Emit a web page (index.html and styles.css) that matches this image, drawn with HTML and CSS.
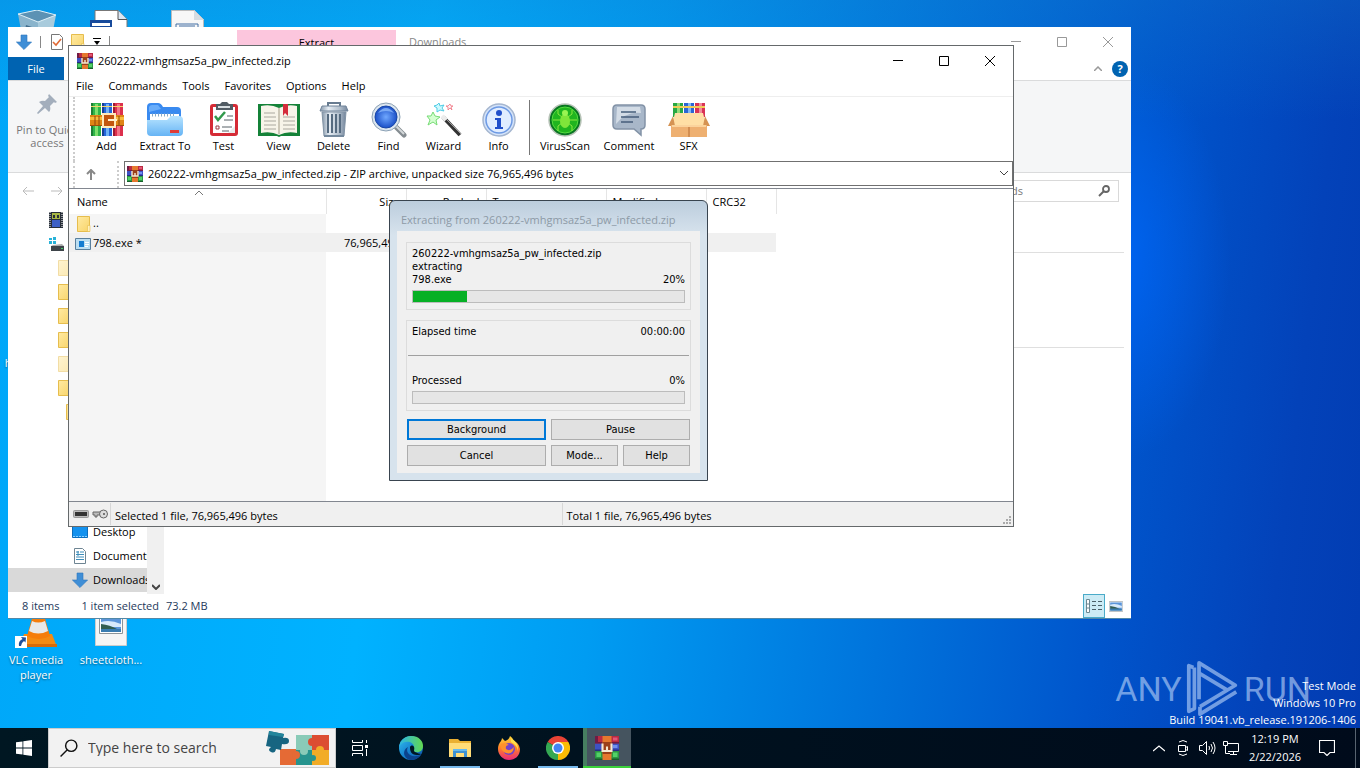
FILE: index.html
```html
<!DOCTYPE html>
<html lang="en">
<head>
    <meta charset="UTF-8">
    <meta name="viewport" content="width=device-width, initial-scale=1.0">
    <title>Desktop</title>
    <link rel="stylesheet" href="styles.css">
</head>
<body>

<svg class="defs" aria-hidden="true">
    <defs>
        <linearGradient id="g-folder" x2="1" y2="1"><stop offset="0" stop-color="#ffeaa3"/><stop offset="1" stop-color="#f8d469"/></linearGradient>
        <linearGradient id="g-blue" x2="0" y2="1"><stop offset="0" stop-color="#b8e4ff"/><stop offset="1" stop-color="#66b4f5"/></linearGradient>
        <linearGradient id="g-steel" x2="1" y2="0"><stop offset="0" stop-color="#8496a8"/><stop offset=".3" stop-color="#e6edf4"/><stop offset=".7" stop-color="#b3c0cd"/><stop offset="1" stop-color="#71839a"/></linearGradient>
        <radialGradient id="g-lens"><stop offset="0" stop-color="#70a8ff"/><stop offset="1" stop-color="#1b50c8"/></radialGradient>
        <linearGradient id="g-edge" x2="1" y2="1"><stop offset="0" stop-color="#35c1f1"/><stop offset=".5" stop-color="#1684d0"/><stop offset="1" stop-color="#0c50a4"/></linearGradient>
        <linearGradient id="g-edge2" x2="1" y2="0"><stop offset="0" stop-color="#2bb5e9"/><stop offset="1" stop-color="#62d94f"/></linearGradient>
        <linearGradient id="g-fox" x2="0" y2="1"><stop offset="0" stop-color="#ffd83a"/><stop offset=".5" stop-color="#ff8128"/><stop offset="1" stop-color="#e9287a"/></linearGradient>
    </defs>
    <symbol id="rar" viewBox="0 0 16 16">
        <path fill="#b92b42" d="M0 0h16v5H0z"/><path fill="#3e52c4" d="M0 5h16v5H0z"/><path fill="#2c9744" d="M0 10h16v6H0z"/>
        <path fill="#711b45" d="M0 4h16v1H0zM0 0h2v5H0z"/><path fill="#252d83" d="M0 9h16v1H0z"/><path fill="#165e2b" d="M0 15h16v1H0z"/>
        <path fill="#52d167" d="M1 11h3v3H1zM12 11h3v3h-3z"/><path fill="#e35577" d="M12 1h3v2h-3z"/><path fill="#7190ed" d="M12 6h3v2h-3z"/>
        <path fill="#e5782e" d="M5 0h6v16H5z"/><path fill="#9b401b" d="M5 4h6v8H5z"/>
        <path fill="none" stroke="#f7e8d0" stroke-width="1.4" d="M5 5v5h6V5M8 7v3"/>
    </symbol>
    <symbol id="folder" viewBox="0 0 14 16">
        <path fill="url(#g-folder)" stroke="#e6bd4d" d="M.5.5h12v15H.5z"/><path fill="#fff1bd" stroke="#e6bd4d" stroke-width=".6" d="M10.5 9.5h2.5v6h-2.5z"/>
    </symbol>
    <symbol id="down" viewBox="0 0 16 16">
        <path fill="#3f8ed6" stroke="#2b76bd" stroke-width=".6" d="M5 1h6v7h4.600L8 15.600.4 8H5z"/>
    </symbol>
    <symbol id="pic" viewBox="0 0 24 18">
        <path fill="#fff" stroke="#8c9499" d="M.5.5h23v17H.5z"/><path fill="#5b95d9" d="M2 2h20v14H2z"/><path fill="#d8eafb" d="M2 6q9-3 20 2v3H2z"/><path fill="#315d50" d="M2 8q9 1 16 5H2z"/><path fill="#397cb0" d="M2 13h20v3H2z"/>
    </symbol>
    <symbol id="glass" viewBox="0 0 16 16">
        <circle cx="10" cy="6" r="5" fill="none" stroke="currentColor" stroke-width="1.300"/><path stroke="currentColor" stroke-width="1.300" d="M6.500 9.500.5 15.500"/>
    </symbol>
    <symbol id="min" viewBox="0 0 10 10"><path stroke="currentColor" d="M0 4.500h10"/></symbol>
    <symbol id="max" viewBox="0 0 10 10"><path fill="none" stroke="currentColor" d="M.5.500h9v9h-9z"/></symbol>
    <symbol id="close" viewBox="0 0 10 10"><path stroke="currentColor" d="m0 0 10 10M10 0 0 10"/></symbol>
</svg>

<main class="desktop">

    <!-- desktop icons -->
    <div class="shortcut bin">
        <svg width="40" height="44" viewBox="0 0 40 44"><path fill="#8ab4cc" d="m1 4 20 7v30L7 36z"/><path fill="#a9cbdc" d="m21 11 18-6-6 31-12 5z"/><path fill="#5c92b4" stroke="#e0f1f8" d="m1 4 19-4 19 5-18 7z"/><path fill="#416d8d" d="m9 15 6 2 1 5-8-2z"/></svg>
    </div>
    <div class="shortcut doc">
        <svg width="38" height="44" viewBox="0 0 38 44"><path fill="#fff" stroke="#777" d="M5 .5h23l9 9V44H5z"/><path fill="#dde7f2" stroke="#555" d="M28 .5v9h9"/><path fill="#174a9b" d="M0 10h22v20H0z"/><path fill="#fff" d="M2 13h18v3H2zM4 17h3v4H4zM10 17h2v4h-2z"/></svg>
    </div>
    <div class="shortcut sheet">
        <svg width="33" height="44" viewBox="0 0 33 44"><path fill="#f7f7f7" stroke="#bbb" d="M.5.5h23l9 9V44H.5z"/><path fill="#d5dce2" d="M23 0v10h10z"/><path fill="none" stroke="#436fa4" d="M5 14h22v20H5z"/><path stroke="#436fa4" d="M8 16h16"/></svg>
    </div>
    <div class="shortcut hidden-label">h</div>
    <div class="shortcut vlc">
        <svg width="42" height="40" viewBox="0 0 42 40"><path fill="#f48b13" d="M9 26h28l5 13H4z"/><path fill="#d96b07" d="M4 36h38v3H4z"/><path fill="#f57d0b" d="M20 0h7l8 28q-11 6-23 0z"/><path fill="#e8e8e8" d="m17 13-3 10q9 5 19 0l-3-10q-7 3-13 0z"/><path fill="#fff" d="M0 28h12v12H0z"/><path fill="#20509a" d="m6 29 5 .5-.5 5-1.500-1.500q-3 2-3 5L4 38q-1-5 3.500-7z"/></svg>
        <span>VLC media player</span>
    </div>
    <div class="shortcut image">
        <svg width="32" height="38" viewBox="0 0 32 38"><path fill="#f5f5f5" stroke="#ccc" d="M.5.5h31v37H.5z"/><use href="#pic" x="4" y="8" width="24" height="18"/></svg>
        <span>sheetcloth...</span>
    </div>

    <!-- file explorer -->
    <section class="window explorer">
        <header class="ex-title">
            <div class="quick">
                <svg width="16" height="16"><use href="#down"/></svg>
                <i class="bar"></i>
                <svg class="check" width="12" height="16" viewBox="0 0 12 16"><path fill="#fff" stroke="#777" d="M.5.500h8l3 3v12H.5z"/><path fill="none" stroke="#e06a35" stroke-width="1.600" d="m2 8 3 3 5-6"/></svg>
                <svg width="14" height="16"><use href="#folder"/></svg>
                <svg class="drop" width="8" height="8" viewBox="0 0 8 8"><path d="M0 0h8v1H0zM1 3h6L4 7z"/></svg>
                <i class="bar"></i>
            </div>
            <div class="extract-tab">Extract</div>
            <span class="ex-name">Downloads</span>
            <div class="win-buttons muted">
                <button aria-label="Minimize"><svg width="10" height="10"><use href="#min"/></svg></button>
                <button aria-label="Maximize"><svg width="10" height="10"><use href="#max"/></svg></button>
                <button aria-label="Close"><svg width="10" height="10"><use href="#close"/></svg></button>
            </div>
        </header>
        <div class="ex-tabs">
            <button class="file-tab">File</button>
            <div class="ex-help">
                <svg width="8" height="5" viewBox="0 0 8 5"><path fill="none" stroke="#999" stroke-width="1.500" d="m0 5 4-4 4 4"/></svg>
                <button aria-label="Help">?</button>
            </div>
        </div>
        <div class="ribbon">
            <button class="pin">
                <svg width="22" height="22" viewBox="0 0 22 22"><path fill="#a3aebc" d="m13 1 8 8-2 1-1-1-4 4q1 4-1 6l-4-4-7 6-1-1 6-7-4-4q3-2 6-1l4-4-1-1z"/></svg>
                <span>Pin to Quick access</span>
            </button>
        </div>
        <div class="ex-nav">
            <svg width="12" height="10" viewBox="0 0 12 10"><path fill="none" stroke="#bbb" d="M12 5H1M5 1 1 5l4 4"/></svg>
            <svg width="12" height="10" viewBox="0 0 12 10"><path fill="none" stroke="#bbb" d="M0 5h11M7 1l4 4-4 4"/></svg>
            <label class="ex-search">
                <input type="text" placeholder="Search Downloads" aria-label="Search Downloads">
                <svg width="12" height="12" viewBox="0 0 12 12"><circle cx="8" cy="4" r="3" fill="none" stroke="#666" stroke-width="1.800"/><path stroke="#666" stroke-width="2" d="m6 6-5 5"/></svg>
            </label>
        </div>
        <div class="ex-body">
            <div class="tree">
                <div class="node root"><svg width="14" height="16" viewBox="0 0 14 16"><path fill="#272e38" d="M0 0h14v16H0z"/><path fill="#a7b644" d="M3 1h8v6H3z"/><path fill="#3d60c6" d="M3 8h8v7H3z"/><path fill="#272e38" d="M4 3h2v3H4zM8 3h2v3H8z"/><path stroke="#fff" stroke-dasharray="1 1" d="M1 0v16M13 0v16"/></svg></div>
                <div class="node root"><svg width="15" height="14" viewBox="0 0 15 14"><path fill="#28b2d8" d="M0 1h3v2H0zM4 0h3v3H4zM0 4h3v3H0zM4 4h3v3H4z"/><path fill="#aaa" d="m4 8 9-1 2 2H2z"/><path fill="#3d4449" d="M2 9h13v5H2z"/><path fill="#46d16b" d="M12 11h2v1h-2z"/></svg></div>
                <div class="node faded"><svg width="14" height="16"><use href="#folder"/></svg></div>
                <div class="node"><svg width="14" height="16"><use href="#folder"/></svg></div>
                <div class="node"><svg width="14" height="16"><use href="#folder"/></svg></div>
                <div class="node"><svg width="14" height="16"><use href="#folder"/></svg></div>
                <div class="node faded"><svg width="14" height="16"><use href="#folder"/></svg></div>
                <div class="node"><svg width="14" height="16"><use href="#folder"/></svg></div>
                <div class="node sub"><svg width="14" height="16"><use href="#folder"/></svg></div>
                <div class="node"></div>
                <div class="node"></div>
                <div class="node"></div>
                <div class="node"></div>
                <div class="node leaf"><svg width="16" height="16" viewBox="0 0 16 16"><path fill="#1391ee" stroke="#0c6dbb" d="M.5 1.500h15v12H.5z"/><path stroke="#8ed0ff" stroke-dasharray="2 1" d="M1 12.500h14"/></svg>Desktop</div>
                <div class="node leaf"><svg width="16" height="16" viewBox="0 0 16 16"><path fill="#fff" stroke="#6e8593" d="M2.500.500h8l3 3v12h-11z"/><path stroke="#3c8dba" d="M8 4h4M4 4h3M4 6.500h8M4 9h8M4 11.500h8M6 3v5"/></svg>Documents</div>
                <div class="node leaf selected"><svg width="16" height="16"><use href="#down"/></svg>Downloads</div>
            </div>
            <div class="scroll"><svg width="8" height="6" viewBox="0 0 8 6"><path fill="none" stroke="#444" stroke-width="2" d="m0 1 4 4 4-4"/></svg></div>
            <div class="files"><div class="group"></div><div class="group tall"></div></div>
        </div>
        <footer class="ex-status">
            <span>8 items</span><span>1 item selected</span><span>73.2 MB</span>
            <div class="views">
                <button class="active" aria-label="Details"><svg width="16" height="14" viewBox="0 0 16 14"><path fill="#fff" stroke="#6b8791" d="M.5.500h3v13h-3zM.5 5h3M.5 9h3"/><path stroke="#4b606a" d="M6 2.500h4M12 2.500h4M6 6.500h4M12 6.500h4M6 10.500h4M12 10.500h4"/></svg></button>
                <button aria-label="Large icons"><svg width="14" height="11"><use href="#pic"/></svg></button>
            </div>
        </footer>
    </section>

    <!-- archive window -->
    <section class="window archive">
        <header class="ar-title">
            <svg width="16" height="16"><use href="#rar"/></svg>
            <span>260222-vmhgmsaz5a_pw_infected.zip</span>
            <div class="win-buttons">
                <button aria-label="Minimize"><svg width="10" height="10"><use href="#min"/></svg></button>
                <button aria-label="Maximize"><svg width="10" height="10"><use href="#max"/></svg></button>
                <button aria-label="Close"><svg width="10" height="10"><use href="#close"/></svg></button>
            </div>
        </header>
        <nav class="menu">
            <button>File</button><button>Commands</button><button>Tools</button><button>Favorites</button><button>Options</button><button>Help</button>
        </nav>
        <div class="toolbar">
            <button>
                <svg width="36" height="36" viewBox="0 0 36 36"><path fill="#2fb449" d="M2 1h10v33H2z"/><path fill="#2465d7" d="M13 1h10v33H13z"/><path fill="#dc304d" d="M24 1h10v33H24z"/><path fill="#1b7f35" d="M2 1h2v33H2z"/><path fill="#7ddf6d" d="M6 2h3v32H6z"/><path fill="#173f94" d="M13 1h2v33h-2z"/><path fill="#6fb2f7" d="M17 2h3v32h-3z"/><path fill="#9d1933" d="M24 1h2v33h-2z"/><path fill="#f27387" d="M28 2h3v32h-3z"/><path fill="#f2d36b" d="M2 4h10v1H2zM13 4h10v1H13zM24 4h10v1H24z"/><path fill="#df8416" d="M1 13h34v11H1z"/><path fill="#f8bd3e" d="M1 15h34v3H1z"/><path fill="#9f4e0c" d="M1 23h34v1H1z"/><rect x="14" y="12" width="12" height="13" fill="#c2560f" stroke="#ffe9b9" stroke-width="2"/><path stroke="#fff1cf" stroke-width="2" d="M19 18h9"/><path stroke="#8d4408" d="M6 14v9M10 14v9M30 14v9"/></svg>
                <span>Add</span>
            </button>
            <button class="mid">
                <svg width="36" height="36" viewBox="0 0 36 36"><path fill="#398af0" d="M0 5q0-4 4-4h7q3 0 5 4h14q4 0 4 4v21H0z"/><path fill="#69adfa" d="M2 5q1-2 3-2h6l3 4-12 3z"/><path fill="#fff" d="M3 12h29v10H3z"/><path stroke="#86a8c4" stroke-width="3" stroke-dasharray="1 2" d="M5 13h24"/><path fill="url(#g-blue)" d="M0 18h20l4-4h8q4 0 4 4v12q0 4-4 4H4q-4 0-4-4z"/><path fill="#df3b37" d="M23 28h9v3h-9z"/></svg>
                <span>Extract To</span>
            </button>
            <button>
                <svg width="36" height="36" viewBox="0 0 36 36"><rect x="4" y="2" width="28" height="32" rx="3" fill="#d52b36"/><path fill="#fff" d="M7 5h22v26H7z"/><path fill="#e8ebeb" d="M22 31h7v-7z"/><path fill="#525c64" d="M10 2h4l2-2h5l2 2h4v6H10z"/><path fill="#d9dfe2" d="M12 4h12v2H12z"/><path fill="none" stroke="#329a4c" stroke-width="2.500" d="m9 14 3 4 7-8"/><path fill="none" stroke="#9b3f49" d="M10 24h3v3h-3z"/><path stroke="#596269" d="M21 14h6M18 18h9M16 25h10M16 29h7"/></svg>
                <span>Test</span>
            </button>
            <button>
                <svg width="42" height="36" viewBox="0 0 42 36"><path fill="#148238" d="M0 2h42v32H23l-2 1-2-1H0z"/><path fill="#f7f4e9" d="M3 4q10-2 18 2 8-4 18-2v27q-10-2-18 2-8-4-18-2z"/><path fill="#ccc7b7" d="M20 6h2v26h-2z"/><path stroke="#aaa89f" d="M6 11h11M6 15h12M6 19h12M6 23h12M6 27h12M25 15h12M25 19h12M25 23h12M25 27h12"/><path fill="#d42d3c" d="M25 2h5v12l-3-3-2 3z"/></svg>
                <span>View</span>
            </button>
            <button>
                <svg width="36" height="36" viewBox="0 0 36 36"><path fill="none" stroke="#677b90" stroke-width="2" d="M12 4V1h12v3"/><path fill="url(#g-steel)" stroke="#8193a5" d="M6 10h24l-2 24H8z"/><path stroke="#566b80" stroke-width="2" d="M12 12v19M16 12v19M20 12v19M24 12v19"/><path fill="url(#g-steel)" stroke="#71849a" d="M6 4h24l2 5H4z"/><path fill="#74899d" d="M8 33h20v2H8z"/></svg>
                <span>Delete</span>
            </button>
            <button>
                <svg width="36" height="36" viewBox="0 0 36 36"><path stroke="#858c91" stroke-width="5" stroke-linecap="round" d="m24 24 9 9"/><path stroke="#d4d8da" stroke-width="2" d="m25 24 8 8"/><circle cx="15" cy="15" r="14" fill="#dce6ef" stroke="#8ca1b5"/><circle cx="15" cy="15" r="11" fill="url(#g-lens)" stroke="#1947a6"/><path fill="#97c3ff" opacity=".7" d="M7 11q8-10 16 0-8-4-16 0z"/></svg>
                <span>Find</span>
            </button>
            <button>
                <svg width="36" height="36" viewBox="0 0 36 36"><path stroke="#333" stroke-width="4" d="m17 15 17 18"/><path stroke="#9b9b9b" d="m17 14 18 18"/><path stroke="#ececec" stroke-width="4" d="m16 14 4 4"/><path fill="#d4ffd0" stroke="#77db76" d="m7 10 2 4 5 1-4 3 1 5-4-3-5 3 2-5-3-4h4z"/><path fill="#cdfaff" stroke="#51cce5" d="m13 1 1 3 4-1-2 3 2 3-4-1-3 2v-4L8 4l3-1z"/><path fill="#fff0f3" stroke="#ef7382" stroke-width=".8" d="m24 2 1 2h2l-2 1 1 3-2-2-2 2v-3l-2-1h2z"/></svg>
                <span>Wizard</span>
            </button>
            <button>
                <svg width="36" height="36" viewBox="0 0 36 36"><circle cx="18" cy="18" r="16" fill="#d4e3f9" stroke="#a5b6cf" stroke-width="1.500"/><circle cx="18" cy="18" r="13" fill="#e1edff" stroke="#6d9ae4" stroke-width="1.500"/><circle cx="18" cy="11" r="3" fill="#214fca"/><path fill="#214fca" d="M14 16h6v9h2v2h-8v-2h2v-7h-2z"/></svg>
                <span>Info</span>
            </button>
            <i class="split"></i>
            <button class="wide">
                <svg width="36" height="36" viewBox="0 0 36 36"><circle cx="18" cy="18" r="16" fill="#087620" stroke="#b8c3b8" stroke-width="1.500"/><circle cx="18" cy="18" r="13" fill="#20b51f" stroke="#54dc40"/><path stroke="#8ce640" fill="none" d="M11 8v4l4 3M25 8v4l-4 3M6 18h8M22 18h8M11 29v-5l4-3M25 29v-5l-4-3"/><ellipse cx="18" cy="19" rx="5" ry="7" fill="#80e53a"/><circle cx="18" cy="11" r="3" fill="#9af452"/></svg>
                <span>VirusScan</span>
            </button>
            <button class="wide">
                <svg width="36" height="36" viewBox="0 0 36 36"><path fill="#a8b7c9" stroke="#8292a6" stroke-width="1.500" d="M6 3h24q4 0 4 4v16q0 4-4 4v6l-7-6H6q-4 0-4-4V7q0-4 4-4z"/><path fill="#d3dce6" d="M6 5h23l1 6Q15 9 5 22z"/><path stroke="#455d7b" stroke-width="1.500" d="M10 10h15M10 15h18M10 20h12"/></svg>
                <span>Comment</span>
            </button>
            <button>
                <svg width="42" height="36" viewBox="0 0 42 36"><path fill="#29a843" d="M5 1h10v14H5z"/><path fill="#2c66d4" d="M16 1h10v14H16z"/><path fill="#d93355" d="M27 1h10v14H27z"/><path fill="#93dc79" d="M9 1h3v12H9z"/><path fill="#80b6f4" d="M20 1h3v12h-3z"/><path fill="#f18b9d" d="M31 1h3v12h-3z"/><path fill="#f1cb57" d="M5 4h32v2H5z"/><path fill="#ffdfa5" d="M7 11h28l3 12H4z"/><path fill="#d59353" d="m5 14-5 10h7zM37 14l5 10h-7z"/><path fill="#eeb071" d="M3 23h36v12H3z"/><path fill="#d28e52" d="M20 23h2v12h-2z"/><path fill="#fbd39c" d="M4 23h34v2H4z"/></svg>
                <span>SFX</span>
            </button>
        </div>
        <div class="address-row">
            <button class="up" aria-label="Up"><svg width="10" height="11" viewBox="0 0 10 11"><path fill="none" stroke="#888" stroke-width="2" d="M5 11V2M1 5l4-4 4 4"/></svg></button>
            <div class="address">
                <svg width="16" height="16"><use href="#rar"/></svg>
                <input type="text" aria-label="Address" value="260222-vmhgmsaz5a_pw_infected.zip - ZIP archive, unpacked size 76,965,496 bytes">
                <button aria-label="Open list"><svg width="8" height="5" viewBox="0 0 8 5"><path fill="none" stroke="#444" d="m0 0 4 4 4-4"/></svg></button>
            </div>
        </div>
        <div class="list">
            <svg class="sort" width="8" height="5" viewBox="0 0 8 5"><path fill="none" stroke="#777" d="m0 5 4-4 4 4"/></svg>
            <table>
                <thead>
                    <tr><th class="c-name">Name</th><th class="c-num">Size</th><th class="c-num">Packed</th><th class="c-type">Type</th><th class="c-mod">Modified</th><th class="c-crc">CRC32</th></tr>
                </thead>
                <tbody>
                    <tr><td><svg class="f" width="14" height="16"><use href="#folder"/></svg>..</td><td></td><td></td><td></td><td></td><td></td></tr>
                    <tr class="picked"><td><svg width="16" height="12" viewBox="0 0 16 12"><path fill="#bbdef2" stroke="#587f9d" d="M.5.500h15v11H.5z"/><path fill="#147cd1" d="M4 3h5v6H4z"/><path stroke="#fff" d="M10 4.500h4M10 6.500h4M10 8.500h3"/></svg>798.exe *</td><td class="c-num">76,965,496</td><td></td><td></td><td></td><td></td></tr>
                </tbody>
            </table>
        </div>
        <footer class="ar-status">
            <div class="status-icons">
                <svg width="16" height="8" viewBox="0 0 16 8"><rect x=".5" y=".5" width="15" height="7" rx="1" fill="#bbb" stroke="#999"/><path fill="#333" d="M2 2h12v4H2z"/></svg>
                <svg width="16" height="10" viewBox="0 0 16 10"><path fill="#bbb" stroke="#666" d="M1 3h8v3H5v2H3V6H1z"/><circle cx="11.500" cy="5" r="4" fill="#ddd" stroke="#666"/><circle cx="12" cy="5" r="1" fill="#555"/></svg>
            </div>
            <span>Selected 1 file, 76,965,496 bytes</span>
            <span>Total 1 file, 76,965,496 bytes</span>
            <svg class="grip" width="8" height="8" viewBox="0 0 8 8"><path fill="#aaa" d="M6 0h2v2H6zM3 3h2v2H3zM6 3h2v2H6zM0 6h2v2H0zM3 6h2v2H3zM6 6h2v2H6z"/></svg>
        </footer>
    </section>

    <!-- extraction progress -->
    <section class="dialog" role="dialog" aria-labelledby="dialog-title">
        <h2 id="dialog-title">Extracting from 260222-vmhgmsaz5a_pw_infected.zip</h2>
        <div class="dialog-body">
            <div class="box">
                <p>260222-vmhgmsaz5a_pw_infected.zip</p>
                <p>extracting</p>
                <p class="pair"><label for="file-progress">798.exe</label><span>20%</span></p>
                <progress id="file-progress" value="20" max="100"></progress>
            </div>
            <div class="box second">
                <p class="pair"><span>Elapsed time</span><span>00:00:00</span></p>
                <hr>
                <p class="pair"><label for="total-progress">Processed</label><span>0%</span></p>
                <progress id="total-progress" value="0" max="100"></progress>
            </div>
            <div class="actions">
                <button class="default">Background</button><button class="half">Pause</button>
                <button>Cancel</button><button>Mode...</button><button>Help</button>
            </div>
        </div>
    </section>

    <!-- watermark -->
    <div class="brand">
        <span>ANY</span>
        <svg width="54" height="62" viewBox="0 0 58 62"><path fill="none" stroke="currentColor" stroke-width="4" stroke-linejoin="round" d="M8 8 3 6v49l6-3V8M14 42V3l39 24-38 23M14 14l30 18M15 50v8l39-24"/></svg>
        <span>RUN</span>
    </div>
    <div class="build"><p>Test Mode</p><p>Windows 10 Pro</p><p>Build 19041.vb_release.191206-1406</p></div>
</main>

<footer class="taskbar">
    <button class="start" aria-label="Start"><svg width="16" height="16" viewBox="0 0 16 16"><path fill="#fff" d="M0 2.300 6.500 1.400v6.200H0zM7.300 1.300 16 0v7.600H7.300zM0 8.400h6.500v6.200L0 13.700zM7.300 8.400H16V16l-8.700-1.300z"/></svg></button>
    <label class="search">
        <svg width="18" height="18"><use href="#glass"/></svg>
        <input type="text" placeholder="Type here to search" aria-label="Search">
        <svg width="64" height="36" viewBox="0 0 64 36"><path fill="#e56a35" d="M14 19h17v16H14z"/><path fill="#8acbb8" d="M30 5h17v16H30z"/><path fill="#dc4d32" d="M46 5h17v15H46z"/><path fill="#27948e" d="M30 20h17v15H30z"/><path fill="#f2ac27" d="M46 20h17v15H46z"/><circle cx="30" cy="25" r="4" fill="#e56a35"/><circle cx="38" cy="21" r="4" fill="#8acbb8"/><circle cx="46" cy="12" r="4" fill="#dc4d32"/><circle cx="54" cy="20" r="4" fill="#f2ac27"/><circle cx="47" cy="28" r="3" fill="#27948e"/><path fill="#176581" d="m3 1 15 3-1 4q6-1 6 3t-7 3l-1 6-5-1q-1 5-5 3t0-5L0 16z"/><path fill="#23859b" d="m3 1 15 3-1 3L3 5z"/></svg>
    </label>
    <button class="task view" aria-label="Task View"><svg width="16" height="16" viewBox="0 0 16 16"><path fill="none" stroke="#fff" d="M.5 0v2.500h10V0M.5 5.500h10v5H.5zM.5 16v-2.500h10V16M14.500 0v3M14.500 9v7"/><path fill="#fff" d="M13 5h3v3h-3z"/></svg></button>
    <button class="task" aria-label="Edge"><svg width="24" height="24" viewBox="0 0 24 24"><circle cx="12" cy="12" r="12" fill="url(#g-edge)"/><path fill="url(#g-edge2)" d="M0 11C1 4 6 0 12 0c8 0 12 5 12 10 0 5-4 7-8 6-3-1-1-3-1-5 0-6-11-8-15 0z"/><path fill="#0b438d" d="M9 11c-3 5 2 12 13 8-3 4-7 5-11 5-7-2-8-10-2-13z"/><path fill="#001722" d="M11 11c0 4 1 8 7 8 2 0 4-.5 4-1-2 0-3-1-6-2-2-1 0-3-1-5-1-2-3-2-4 0z"/></svg></button>
    <button class="task open" aria-label="File Explorer"><svg width="22" height="20" viewBox="0 0 22 20"><path fill="#eab032" d="M0 1h9l2 2h11v16H0z"/><path fill="#ffdc78" d="M0 5h22v14H0z"/><path fill="#3d91d2" d="M4 11h14v8h-3v-4H7v4H4z"/><path fill="#65b9ef" d="M4 11h14v2H4z"/></svg></button>
    <button class="task" aria-label="Firefox"><svg width="24" height="24" viewBox="0 0 24 24"><path fill="url(#g-fox)" d="M4 5q1-2 1-3l3 3q4-1 5-5 3 2 4 5 5 2 6 8c0 7-5 11-11 11S1 19 1 13q0-5 3-8z"/><circle cx="12" cy="13" r="6" fill="#7442c9"/><path fill="#ff912b" d="M4 8q4-2 8 1-4 0-3 4 4 3 8-2-1 8-8 6-6-2-5-9z"/><path fill="#ffe04b" d="M14 2q8 5 7 13-1-6-7-9z"/></svg></button>
    <button class="task open" aria-label="Chrome"><svg width="24" height="24" viewBox="0 0 24 24"><path fill="#e94335" d="M12 12 1.600 6A12 12 0 0 1 22.400 6z"/><path fill="#fbbc05" d="M12 6h10.400A12 12 0 0 1 12 24z"/><path fill="#34a853" d="M1.600 6 12 12v12A12 12 0 0 1 1.600 6z"/><path fill="#fbbc05" d="m12 24 5.500-9L12 12z"/><circle cx="12" cy="12" r="6" fill="#fff"/><circle cx="12" cy="12" r="4.500" fill="#4285f4"/></svg></button>
    <button class="task current" aria-label="WinRAR"><svg width="24" height="24"><use href="#rar"/></svg></button>
    <div class="tray">
        <button aria-label="Show hidden icons"><svg width="12" height="7" viewBox="0 0 12 7"><path fill="none" stroke="#fff" stroke-width="1.300" d="m0 6 6-5 6 5"/></svg></button>
        <button aria-label="Meet now"><svg width="12" height="16" viewBox="0 0 12 16"><path fill="none" stroke="#fff" d="M1.500 5.500h7v6h-7zM8.500 7.500l2-1v4l-2-1M2 2q4-3 8 0M2 14q4 3 8 0"/></svg></button>
        <button aria-label="Volume"><svg width="17" height="14" viewBox="0 0 17 14"><path fill="none" stroke="#fff" d="M.5 4.500h3l4-4v13l-4-4h-3zM10 5q1 2 0 4M12 3q3 4 0 8M14 1q4 6 0 12"/></svg></button>
        <button aria-label="Network"><svg width="16" height="14" viewBox="0 0 16 14"><path fill="none" stroke="#fff" d="M5 2.500h10.500v8H5M.5.500h4v4h-4zM2.500 4.500v8H7M10.500 10v3M7 13.500h7"/></svg></button>
        <div class="clock"><span>12:19 PM</span><span>2/22/2026</span></div>
        <button class="notice" aria-label="Notifications"><svg width="16" height="16" viewBox="0 0 16 16"><path fill="none" stroke="#fff" stroke-width="1.200" d="M.5.500h15v12H11l-3 3-3-3H.5z"/></svg></button>
        <i class="peek"></i>
    </div>
</footer>

</body>
</html>
```

FILE: styles.css
```css
* {
    box-sizing: border-box;
}
body {
    margin: 0;
    height: 100vh;
    overflow: hidden;
    display: flex;
    flex-direction: column;
    font: 11px/16px "Open Sans", "Noto Sans", sans-serif;
    color: #000;
}
button, input {
    font: inherit;
    color: inherit;
    border: 0;
    padding: 0;
    background: none;
}
p, h2 {
    margin: 0;
}
svg {
    display: block;
    flex: none;
}
.defs {
    position: absolute;
    width: 0;
    height: 0;
}
.desktop {
    flex: 1;
    position: relative;
    overflow: hidden;
    background:
        radial-gradient(ellipse 110px 200px at 1120px 260px, rgba(0, 105, 255, 0.7), transparent),
        linear-gradient(rgba(20, 120, 200, 0.3), transparent 120px),
        linear-gradient(97deg, #00a6f8 0%, #00b2ff 30%, #009cf2 46%, #0074dc 66%, #0055cc 81%, #0342b9 93%, #023cb2 100%);
}

/* desktop icons */
.shortcut {
    position: absolute;
    width: 76px;
    display: flex;
    flex-direction: column;
    align-items: center;
    gap: 4px;
    color: #fff;
    line-height: 15px;
    text-align: center;
    text-shadow: 0 1px 2px rgba(0, 0, 0, 0.5);
}
.bin { left: -1px; top: 10px; }
.doc { left: 71px; top: 10px; }
.sheet { left: 149px; top: 10px; }
.hidden-label { left: 4px; top: 355px; width: 8px; }
.vlc { left: -2px; top: 608px; }
.image { left: 73px; top: 608px; gap: 6px; }

/* windows */
.window {
    position: absolute;
    display: flex;
    flex-direction: column;
    background: #fff;
}
.win-buttons {
    margin-left: auto;
    display: flex;
}
.win-buttons button {
    width: 46px;
    height: 30px;
    display: flex;
    align-items: center;
    justify-content: center;
}
.muted {
    color: #999;
}

/* explorer */
.explorer {
    left: 8px;
    top: 27px;
    width: 1123px;
    height: 592px;
    border-bottom: 1px solid #5288a8;
}
.ex-title {
    height: 30px;
    display: flex;
}
.quick {
    width: 229px;
    padding-left: 8px;
    display: flex;
    align-items: center;
    gap: 8px;
}
.check {
    margin-left: 2px;
}
.bar {
    width: 1px;
    height: 12px;
    background: #888;
}
.extract-tab {
    width: 159px;
    margin: 3px 13px 0 0;
    padding-top: 5px;
    background: #fcc6dd;
    text-align: center;
}
.ex-name {
    padding-top: 7px;
    color: #888;
}
.ex-tabs {
    height: 24px;
    display: flex;
    justify-content: space-between;
    border-bottom: 1px solid #dadbdc;
}
.file-tab {
    width: 56px;
    background: #0063b1;
    color: #fff;
}
.ex-help {
    display: flex;
    align-items: center;
    gap: 10px;
    padding-right: 3px;
}
.ex-help button {
    width: 16px;
    height: 16px;
    border-radius: 50%;
    background: #0063b1;
    color: #fff;
    font-weight: bold;
}
.ribbon {
    height: 92px;
    background: #f5f6f7;
    border-bottom: 1px solid #dadbdc;
}
.pin {
    width: 78px;
    padding-top: 12px;
    display: flex;
    flex-direction: column;
    align-items: center;
    gap: 8px;
    color: #777;
    line-height: 13px;
}
.ex-nav {
    height: 35px;
    padding: 0 12px 0 14px;
    display: flex;
    align-items: center;
    gap: 17px;
}
.ex-search {
    width: 194px;
    height: 22px;
    margin-left: auto;
    padding: 0 8px 0 2px;
    border: 1px solid #d9d9d9;
    display: flex;
    align-items: center;
    color: #666;
}
.ex-search input {
    flex: 1;
    min-width: 0;
}
.ex-search input::placeholder {
    color: #777;
}
.ex-body {
    flex: 1;
    min-height: 0;
    display: flex;
}
.tree {
    width: 139px;
    overflow: hidden;
}
.node {
    height: 24px;
    padding-left: 50px;
    display: flex;
    align-items: center;
    gap: 5px;
}
.root {
    padding-left: 41px;
}
.sub {
    padding-left: 58px;
}
.leaf {
    padding-left: 64px;
}
.faded svg {
    opacity: 0.5;
}
.selected {
    background: #d9d9d9;
}
.scroll {
    width: 17px;
    background: #f0f0f0;
    display: flex;
    align-items: flex-end;
    justify-content: center;
    padding-bottom: 4px;
}
.files {
    flex: 1;
    padding-right: 7px;
}
.group {
    height: 45px;
    border-bottom: 1px solid #dfdfdf;
}
.tall {
    height: 95px;
}
.ex-status {
    height: 24px;
    padding: 0 4px 0 14px;
    display: flex;
    align-items: center;
    color: #1e395b;
}
.ex-status span {
    margin-right: 22px;
}
.ex-status span + span {
    margin-right: 7px;
}
.views {
    height: 100%;
    margin-left: auto;
    display: flex;
}
.views button {
    width: 22px;
    display: flex;
    align-items: center;
    justify-content: center;
}
.views .active {
    background: #ccebf5;
    border: 1px solid #4aabc9;
}

/* archive window */
.archive {
    left: 68px;
    top: 45px;
    width: 946px;
    height: 482px;
    border: 1px solid #65696b;
}
.ar-title {
    height: 30px;
    padding-left: 8px;
    display: flex;
    align-items: center;
    gap: 5px;
}
.menu {
    height: 21px;
    padding: 1px 7px;
    display: flex;
    gap: 15px;
    border-bottom: 1px solid #eee;
}
.toolbar {
    height: 64px;
    margin-left: 4px;
    padding-left: 4px;
    border-left: 2px dotted #ccc;
    display: flex;
}
.toolbar button {
    width: 55px;
    padding-top: 5px;
    display: flex;
    flex-direction: column;
    align-items: center;
}
.toolbar .mid {
    width: 62px;
}
.toolbar .wide {
    width: 64px;
}
.split {
    width: 1px;
    height: 55px;
    margin: 3px 3px 0;
    background: #777;
}
.address-row {
    height: 27px;
    margin-left: 4px;
    border-left: 2px dotted #ccc;
    display: flex;
}
.up {
    width: 44px;
    padding-left: 11px;
    border-right: 2px dotted #ccc;
}
.address {
    flex: 1;
    height: 25px;
    margin-left: 5px;
    padding: 0 4px 0 2px;
    border: 1px solid #707070;
    display: flex;
    align-items: center;
    gap: 5px;
}
.address input {
    flex: 1;
    min-width: 0;
}
.list {
    flex: 1;
    position: relative;
    border: 1px solid #828790;
    border-width: 1px 0;
    background: linear-gradient(#f5f5f5, #f5f5f5) 0 25px / 257px 100% no-repeat;
}
.sort {
    position: absolute;
    left: 126px;
    top: 1px;
}
table {
    width: 707px;
    table-layout: fixed;
    border-collapse: collapse;
}
th {
    height: 25px;
    padding: 0 6px;
    border-right: 1px solid #e5e5e5;
    font-weight: normal;
    text-align: left;
}
td {
    height: 19px;
    padding: 0 6px;
    white-space: nowrap;
}
td:first-child svg {
    display: inline-block;
    vertical-align: middle;
    margin-right: 2px;
}
td .f {
    margin-left: 2px;
}
.c-name { width: 257px; padding-left: 8px; }
.c-num { width: 80px; text-align: right; }
.c-type { width: 120px; }
.c-mod { width: 100px; }
.c-crc { width: 70px; }
.picked {
    background: #f0f0f0;
}
.ar-status {
    position: relative;
    height: 24px;
    display: flex;
    align-items: center;
    background: #f0f0f0;
}
.status-icons {
    width: 41px;
    padding-left: 4px;
    display: flex;
    align-items: center;
    gap: 3px;
}
.ar-status span {
    flex: 1;
    height: 22px;
    padding: 5px 4px 0;
    border-left: 1px solid #d7d7d7;
}
.grip {
    position: absolute;
    right: 2px;
    bottom: 2px;
}

/* progress dialog */
.dialog {
    position: absolute;
    left: 389px;
    top: 200px;
    width: 319px;
    padding: 0 7px 7px;
    border: 1px solid #39444f;
    border-radius: 6px 6px 0 0;
    background: linear-gradient(#bccddd, #d7e3ed 34px);
    font-family: "DejaVu Sans Condensed", "DejaVu Sans", sans-serif;
    font-size: 11px;
    line-height: 13px;
}
.dialog h2 {
    padding: 11px 4px 3px;
    font: 11px/16px "Open Sans", "Noto Sans", sans-serif;
    color: #8d9aa6;
}
.dialog-body {
    padding: 11px 9px 7px;
    background: #f0f0f0;
}
.box {
    padding: 4px 5px 6px;
    border: 1px solid #dcdcdc;
}
.second {
    margin: 10px 0 8px;
}
.pair {
    display: flex;
    justify-content: space-between;
}
.box hr {
    margin: 17px -4px 18px;
    border: 0;
    border-top: 1px solid #a0a0a0;
}
progress {
    display: block;
    width: 100%;
    height: 13px;
    margin-top: 4px;
    appearance: none;
    border: 1px solid #bcbcbc;
}
progress::-webkit-progress-bar {
    background: #e6e6e6;
}
progress::-webkit-progress-value {
    background: #06b025;
}
.actions {
    padding: 0 1px;
    display: grid;
    grid-template-columns: 139px 1fr 1fr;
    gap: 5px;
}
.actions button {
    height: 21px;
    border: 1px solid #adadad;
    background: #e1e1e1;
}
.actions .default {
    border: 2px solid #0078d7;
}
.actions .half {
    grid-column: span 2;
}

/* watermark and build text */
.brand {
    position: absolute;
    right: 49px;
    bottom: 8px;
    display: flex;
    align-items: center;
    gap: 4px;
    color: rgba(190, 215, 250, 0.6);
    font: 34px/62px "Roboto", sans-serif;
}
.build {
    position: absolute;
    right: 4px;
    bottom: 0;
    color: #fff;
    line-height: 17px;
    text-align: right;
}

/* taskbar */
.taskbar {
    height: 40px;
    display: flex;
    background: linear-gradient(90deg, #001722, #000b1b);
    color: #fff;
}
.start, .task {
    width: 48px;
    display: flex;
    align-items: center;
    justify-content: center;
}
.task {
    margin-left: 1px;
}
.view {
    margin: 0 2px 0 0;
}
.search {
    width: 288px;
    padding: 0 5px 0 11px;
    border: 1px solid #ccc;
    background: #f2f2f2;
    color: #111;
    display: flex;
    align-items: center;
    gap: 10px;
}
.search input {
    flex: 1;
    min-width: 0;
    font-size: 14px;
}
.search input::placeholder {
    color: #444;
}
.open {
    background: linear-gradient(#76b9ed, #76b9ed) center bottom / 40px 2px no-repeat;
}
.current {
    background: #45545f;
    box-shadow: inset 0 -2px #3bd13b, inset 4px 0 #467e60;
}
.tray {
    margin-left: auto;
    display: flex;
    align-items: center;
}
.tray button {
    width: 24px;
    display: flex;
    justify-content: center;
}
.clock {
    width: 64px;
    display: flex;
    flex-direction: column;
    text-align: center;
    line-height: 18px;
}
.tray .notice {
    width: 40px;
}
.peek {
    width: 5px;
    height: 100%;
    margin-left: 8px;
    border-left: 1px solid #586470;
}
```
